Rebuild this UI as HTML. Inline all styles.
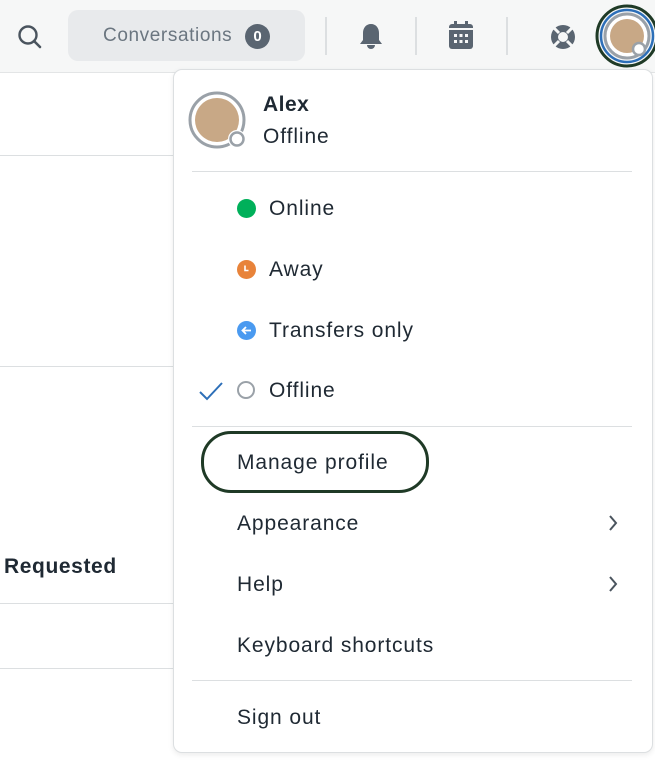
<!DOCTYPE html>
<html><head><style>
body{margin:0;width:655px;height:760px;overflow:hidden;background:#fff;font-family:"Liberation Sans",Arial,sans-serif;color:#1f2933;position:relative}
.hdr{position:absolute;left:0;top:0;width:655px;height:72px;background:#f6f7f7;border-bottom:1px solid #e3e5e6}
.line{position:absolute;left:0;width:175px;height:1px;background:#dcdfe1}
.dd{position:absolute;left:173px;top:69px;width:478px;height:682px;background:#fff;border:1px solid #dcdfe1;border-radius:9px;box-shadow:0 2px 6px rgba(0,0,0,.08)}
.t{position:absolute;font-size:21px;letter-spacing:0.9px;color:#1f2933;white-space:nowrap}
.sep{position:absolute;left:192px;width:440px;height:1px;background:#dcdfe1}
.vs{position:absolute;top:17px;width:2px;height:38px;background:#dcdfe1}
</style></head><body>
<div class="hdr">
<svg style="position:absolute;left:16px;top:23px" width="28" height="28" viewBox="0 0 28 28"><circle cx="12" cy="12" r="8.5" fill="none" stroke="#4a545e" stroke-width="2.4"/><path d="M18 18l6 6" stroke="#4a545e" stroke-width="2.6" stroke-linecap="round"/></svg>
<div style="position:absolute;left:68px;top:10px;width:237px;height:51px;background:#e8eaec;border-radius:10px"></div>
<div class="t" style="left:103px;top:25px;font-size:19px;letter-spacing:0.6px;color:#6b7680">Conversations</div>
<div style="position:absolute;left:245px;top:24px;width:25px;height:25px;border-radius:50%;background:#5a6571;color:#fff;font-size:15px;font-weight:bold;text-align:center;line-height:25px">0</div>
<div class="vs" style="left:325px"></div><div class="vs" style="left:415px"></div><div class="vs" style="left:506px"></div>
<svg style="position:absolute;left:357px;top:20px" width="28" height="32" viewBox="0 0 28 32"><path d="M14 4c-5 0-8 4-8 9v7l-3 4h22l-3-4v-7c0-5-3-9-8-9z" fill="#5a6571"/><path d="M10 25a4 4 0 0 0 8 0" fill="#5a6571"/></svg>
<svg style="position:absolute;left:447px;top:20px" width="28" height="32" viewBox="0 0 28 32"><rect x="2" y="4" width="24" height="25" rx="3" fill="#5a6571"/><rect x="7" y="1" width="3" height="6" fill="#5a6571"/><rect x="18" y="1" width="3" height="6" fill="#5a6571"/><rect x="2" y="8" width="24" height="2" fill="#f6f7f7"/><g fill="#f6f7f7"><rect x="7" y="14" width="3" height="3"/><rect x="12.5" y="14" width="3" height="3"/><rect x="18" y="14" width="3" height="3"/><rect x="7" y="20" width="3" height="3"/><rect x="12.5" y="20" width="3" height="3"/><rect x="18" y="20" width="3" height="3"/></g></svg>
<svg style="position:absolute;left:550px;top:24px" width="26" height="26" viewBox="0 0 26 26"><circle cx="13" cy="13" r="12" fill="#5a6571"/><circle cx="13" cy="13" r="5" fill="#f6f7f7"/><g stroke="#f6f7f7" stroke-width="3"><path d="M4 4l5 5M22 4l-5 5M4 22l5-5M22 22l-5-5"/></g></svg>
<svg style="position:absolute;left:590px;top:3px" width="66" height="66" viewBox="0 0 66 66"><circle cx="37" cy="33" r="30" fill="#f6f7f7" stroke="#1f3a26" stroke-width="3"/><circle cx="37" cy="33" r="26" fill="none" stroke="#2d6fb8" stroke-width="2.5"/><circle cx="37" cy="33" r="22" fill="#fff" stroke="#9aa1a8" stroke-width="3"/><circle cx="37" cy="33" r="17" fill="#c8a886"/><circle cx="49" cy="46" r="6" fill="#fff" stroke="#9aa1a8" stroke-width="2.5"/></svg>
</div>
<div class="line" style="top:155px"></div><div class="line" style="top:366px"></div><div class="line" style="top:603px"></div><div class="line" style="top:668px"></div>
<div class="t" style="left:4px;top:555px;font-weight:bold;letter-spacing:0.6px">Requested</div>
<div class="dd"></div>
<svg style="position:absolute;left:187px;top:90px" width="64" height="64" viewBox="0 0 64 64"><circle cx="30" cy="30" r="27" fill="#fff" stroke="#9aa1a8" stroke-width="3"/><circle cx="30" cy="30" r="22" fill="#c8a886"/><circle cx="50" cy="49" r="9" fill="#fff"/><circle cx="50" cy="49" r="6.5" fill="#fff" stroke="#9aa1a8" stroke-width="2.5"/></svg>
<div class="t" style="left:263px;top:93px;font-weight:bold;letter-spacing:0.5px">Alex</div>
<div class="t" style="left:263px;top:125px">Offline</div>
<div class="sep" style="top:171px"></div>
<div style="position:absolute;left:237px;top:199px;width:19px;height:19px;border-radius:50%;background:#00b05a"></div>
<div class="t" style="left:269px;top:197px">Online</div>
<svg style="position:absolute;left:237px;top:260px" width="19" height="19" viewBox="0 0 19 19"><circle cx="9.5" cy="9.5" r="9.5" fill="#e8833a"/><path d="M8 5.5v5h3.5" fill="none" stroke="#fff" stroke-width="1.6"/></svg>
<div class="t" style="left:269px;top:258px">Away</div>
<svg style="position:absolute;left:237px;top:321px" width="19" height="19" viewBox="0 0 19 19"><circle cx="9.5" cy="9.5" r="9.5" fill="#4a9af0"/><path d="M14 9.5H5.5M9 6l-3.5 3.5L9 13" fill="none" stroke="#fff" stroke-width="1.8"/></svg>
<div class="t" style="left:269px;top:319px">Transfers only</div>
<svg style="position:absolute;left:198px;top:380px" width="26" height="22" viewBox="0 0 26 22"><path d="M2 12l7 7L24 3" fill="none" stroke="#2d6fb8" stroke-width="2"/></svg>
<div style="position:absolute;left:237px;top:381px;width:14px;height:14px;border-radius:50%;border:2.5px solid #9aa1a8"></div>
<div class="t" style="left:269px;top:379px">Offline</div>
<div class="sep" style="top:426px"></div>
<div style="position:absolute;left:201px;top:431px;width:222px;height:56px;border:3px solid #1f3a26;border-radius:30px"></div>
<div class="t" style="left:237px;top:451px">Manage profile</div>
<div class="t" style="left:237px;top:512px">Appearance</div>
<svg style="position:absolute;left:606px;top:513px" width="14" height="20" viewBox="0 0 14 20"><path d="M4 3l6 7-6 7" fill="none" stroke="#4a545e" stroke-width="2"/></svg>
<div class="t" style="left:237px;top:573px">Help</div>
<svg style="position:absolute;left:606px;top:574px" width="14" height="20" viewBox="0 0 14 20"><path d="M4 3l6 7-6 7" fill="none" stroke="#4a545e" stroke-width="2"/></svg>
<div class="t" style="left:237px;top:634px">Keyboard shortcuts</div>
<div class="sep" style="top:680px"></div>
<div class="t" style="left:237px;top:706px">Sign out</div>
</body></html>
